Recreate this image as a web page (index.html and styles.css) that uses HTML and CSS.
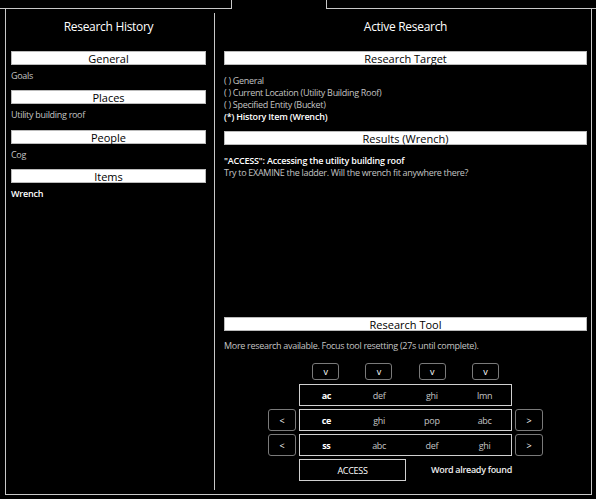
FILE: index.html
```html
<!DOCTYPE html>
<html lang="en">
<head>
  <meta charset="UTF-8" />
  <title>Research</title>
  <meta name="viewport" content="width=device-width, initial-scale=1" />
  <link rel="stylesheet" href="styles.css">
</head>
<body>
  <div class="tabs">
    <div class="tab tab-left"></div>
    <div class="tab tab-right"></div>
  </div>

  <div class="frame">
    <div class="column history">
      <h2 class="title">Research History</h2>

      <div class="section">
        <div class="bar">General</div>
        <div class="entry">Goals</div>
      </div>
      <div class="section">
        <div class="bar">Places</div>
        <div class="entry">Utility building roof</div>
      </div>
      <div class="section">
        <div class="bar">People</div>
        <div class="entry">Cog</div>
      </div>
      <div class="section">
        <div class="bar">Items</div>
        <div class="entry selected">Wrench</div>
      </div>
    </div>

    <div class="column active">
      <h2 class="title">Active Research</h2>

      <div class="bar">Research Target</div>
      <div class="targets">
        <div class="line">( ) General</div>
        <div class="line">( ) Current Location (Utility Building Roof)</div>
        <div class="line">( ) Specified Entity (Bucket)</div>
        <div class="line selected">(*) History Item (Wrench)</div>
      </div>

      <div class="bar">Results (Wrench)</div>
      <div class="results">
        <div class="line selected">"ACCESS": Accessing the utility building roof</div>
        <div class="line">Try to EXAMINE the ladder. Will the wrench fit anywhere there?</div>
      </div>

      <div class="tool">
        <div class="bar">Research Tool</div>
        <div class="line status">More research available. Focus tool resetting (27s until complete).</div>

        <div class="tool-grid">
          <div></div>
          <div class="cells">
            <button class="btn small">v</button>
            <button class="btn small">v</button>
            <button class="btn small">v</button>
            <button class="btn small">v</button>
          </div>
          <div></div>

          <div></div>
          <div class="wheel cells">
            <span class="current">ac</span><span>def</span><span>ghi</span><span>lmn</span>
          </div>
          <div></div>

          <button class="btn">&lt;</button>
          <div class="wheel cells">
            <span class="current">ce</span><span>ghi</span><span>pop</span><span>abc</span>
          </div>
          <button class="btn">&gt;</button>

          <button class="btn">&lt;</button>
          <div class="wheel cells">
            <span class="current">ss</span><span>abc</span><span>def</span><span>ghi</span>
          </div>
          <button class="btn">&gt;</button>

          <div></div>
          <div class="submit-row">
            <button class="access">ACCESS</button>
            <div class="message">Word already found</div>
          </div>
        </div>
      </div>
    </div>
  </div>
</body>
</html>
```

FILE: styles.css
```css
* {
  box-sizing: border-box;
}
body {
  margin: 0;
  background: #000;
  color: #c4c4c4;
  font-family: 'Open Sans', 'Noto Sans', sans-serif;
  font-size: 9px;
  letter-spacing: -0.3px;
  width: 596px;
  height: 499px;
  overflow: hidden;
}
/* tab strip, only the bottom edges show */
.tabs {
  display: flex;
  justify-content: space-between;
  height: 9px;
}
.tab {
  height: 9px;
  border-bottom: 1px solid #c8c8c8;
}
.tab-left {
  width: 232px;
  border-right: 1px solid #c8c8c8;
}
.tab-right {
  width: 270px;
  border-left: 1px solid #c8c8c8;
}
.frame {
  margin-left: 5px;
  width: 587px;
  height: 486px;
  border: 1px solid #c8c8c8;
  border-top: none;
  display: flex;
  padding: 4px 0 4px 0;
}
.column {
  display: flex;
  flex-direction: column;
}
.history {
  width: 208px;
  padding: 0 8px 0 5px;
}
.active {
  flex: 1;
  border-left: 1px solid #c8c8c8;
  padding: 0 4px 0 9px;
}
.title {
  margin: 0 0 12px;
  height: 26px;
  line-height: 27px;
  text-align: center;
  font-size: 12px;
  font-weight: normal;
  color: #fff;
}
.bar {
  height: 14px;
  line-height: 13px;
  background: #fff;
  border: 1px solid #bbb;
  color: #000;
  text-align: center;
  font-size: 11px;
  letter-spacing: 0;
}
.section {
  margin-bottom: 8px;
}
.entry {
  margin-top: 4px;
  height: 13.33px;
  line-height: 14px;
}
.selected {
  color: #fff;
  font-weight: 600;
  letter-spacing: -0.2px;
}
.line {
  height: 12px;
  line-height: 12px;
  white-space: nowrap;
}
.targets {
  margin: 10px 0 8px;
}
.results {
  margin-top: 10px;
}
.tool {
  margin-top: auto;
  padding-bottom: 9px;
}
.status {
  margin: 9px 0 11px;
}
.tool-grid {
  display: grid;
  grid-template-columns: 28px 213px 28px;
  grid-template-rows: 18px;
  grid-auto-rows: 22px;
  column-gap: 3px;
  row-gap: 3px;
  justify-content: center;
}
.cells {
  display: grid;
  grid-template-columns: repeat(4, 1fr);
  justify-items: center;
  align-items: center;
}
.btn {
  background: #000;
  color: #fff;
  border: 1px solid #7a7a7a;
  border-radius: 3px;
  font-family: inherit;
  font-size: 9px;
  padding: 0;
  height: 22px;
  width: 28px;
}
.btn.small {
  width: 27px;
  height: 17px;
  align-self: start;
}
.wheel {
  border: 1px solid #d0d0d0;
  height: 22px;
}
.wheel span {
  font-size: 9px;
}
.wheel .current {
  color: #fff;
  font-weight: bold;
}
.submit-row {
  grid-column: 2 / 4;
  display: grid;
  grid-template-columns: 107px 1fr;
}
.access {
  background: #000;
  color: #fff;
  border: 1px solid #d0d0d0;
  font-family: inherit;
  font-size: 9px;
  letter-spacing: -0.3px;
  height: 22px;
  padding: 0;
}
.message {
  color: #eee;
  font-weight: 600;
  font-size: 9px;
  text-align: center;
  line-height: 22px;
  padding-right: 6px;
}
```
